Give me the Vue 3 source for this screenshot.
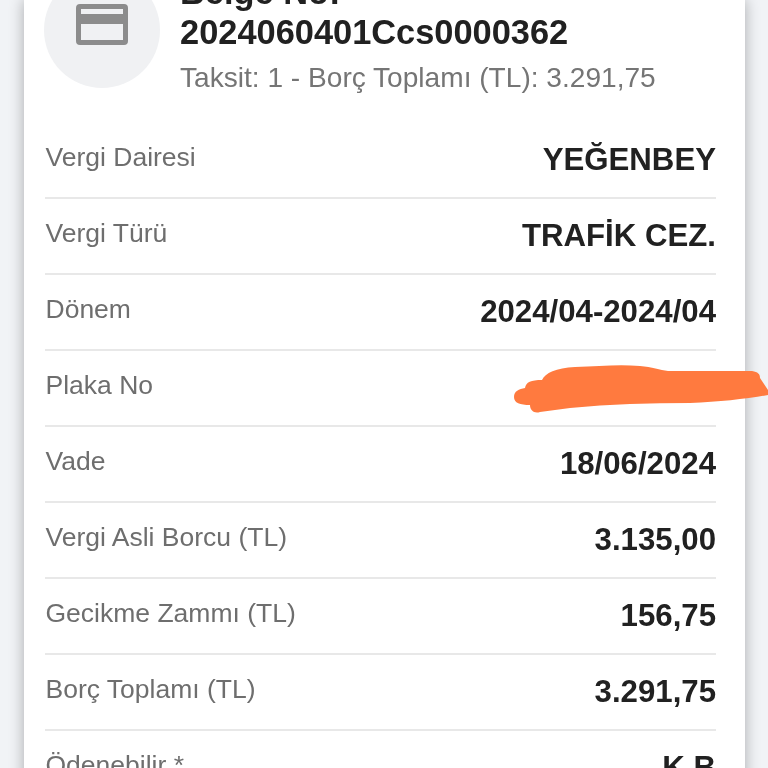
<script setup>
const rows = [
  { label: 'Vergi Dairesi', value: 'YEĞENBEY' },
  { label: 'Vergi Türü', value: 'TRAFİK CEZ.' },
  { label: 'Dönem', value: '2024/04-2024/04' },
  { label: 'Plaka No', value: '' },
  { label: 'Vade', value: '18/06/2024' },
  { label: 'Vergi Asli Borcu (TL)', value: '3.135,00' },
  { label: 'Gecikme Zammı (TL)', value: '156,75' },
  { label: 'Borç Toplamı (TL)', value: '3.291,75' },
  { label: 'Ödenebilir *', value: 'K.B' }
]
</script>

<template>
  <div class="page">
    <main class="card">
      <header class="head">
        <div class="avatar">
          <svg width="52" height="41" viewBox="0 0 52 41" aria-hidden="true">
            <path fill="#8c8c8c" fill-rule="evenodd" d="M4 0h44a4 4 0 0 1 4 4v33a4 4 0 0 1-4 4H4a4 4 0 0 1-4-4V4a4 4 0 0 1 4-4zM5 5v5h42V5zM5 20v16h42V20z" />
          </svg>
        </div>
        <div class="titles">
          <div class="title">Belge No:<br />2024060401Ccs0000362</div>
          <div class="sub">Taksit: 1 - Borç Toplamı (TL): 3.291,75</div>
        </div>
      </header>
      <section class="list">
        <div v-for="r in rows" :key="r.label" class="row">
          <span class="label">{{ r.label }}</span>
          <span class="value">{{ r.value }}</span>
        </div>
      </section>
    </main>
    <svg class="scribble" width="768" height="768" viewBox="0 0 768 768" aria-hidden="true">
      <path fill="#ff7a3f" d="M514 397C514 391 519 389 525 388C526 382 531 380 542 380C545 373 556 368 575 367C600 366 620 364 640 366C652 367 660 370 668 371L752 371C758 372 760 374 760 378L768 390V395C745 399 720 402 690 403C650 403 610 404 570 408L540 412C534 414 530 410 530 405C520 405 514 403 514 397Z" />
    </svg>
  </div>
</template>

<style>
html, body { margin: 0; background: #f1f3f6; }
</style>

<style scoped>
.page {
  position: relative;
  width: 768px;
  height: 768px;
  overflow: hidden;
  background: #f1f3f6;
  font-family: "Liberation Sans", Arial, sans-serif;
  filter: blur(0.4px);
}
.card {
  display: flow-root;
  width: 721px;
  height: 900px;
  margin-left: 24px;
  padding: 0 29px 0 21px;
  box-sizing: border-box;
  background: #fff;
  box-shadow: 0 0 14px rgba(0, 0, 0, 0.3);
}
.head {
  display: flex;
  gap: 20px;
  margin: -28px 0 25px -1px;
}
.avatar {
  flex: none;
  width: 116px;
  height: 116px;
  border-radius: 50%;
  background: #f0f1f3;
  display: flex;
  align-items: center;
  justify-content: center;
  padding-bottom: 12px;
  box-sizing: border-box;
}
.title {
  font-size: 34.4px;
  line-height: 40px;
  font-weight: 700;
  color: #212121;
}
.sub {
  margin-top: 6px;
  font-size: 28.1px;
  line-height: 40px;
  color: #757575;
}
.row {
  display: flex;
  align-items: center;
  justify-content: space-between;
  height: 76px;
  box-sizing: border-box;
  border-bottom: 2px solid #e8e8e8;
}
.label {
  font-size: 26.5px;
  color: #6e6e6e;
  padding-bottom: 5px;
  padding-left: 0.5px;
}
.value {
  font-size: 31.2px;
  font-weight: 700;
  color: #212121;
}
.scribble {
  position: absolute;
  inset: 0;
}
</style>
